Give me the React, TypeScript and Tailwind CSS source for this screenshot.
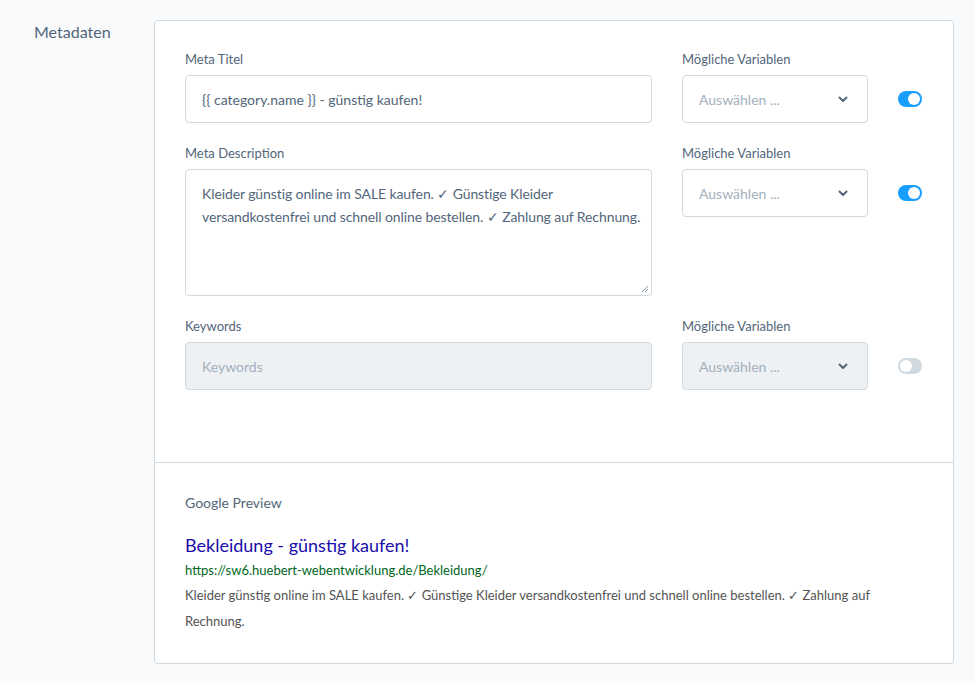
import React from "react";

const font = { fontFamily: "Lato, 'Noto Sans', sans-serif" };

function Chevron() {
  return (
    <svg width="10" height="7" viewBox="0 0 10 7" className="shrink-0">
      <path d="M1.5 1.5 L5 5 L8.5 1.5" fill="none" stroke="#52667a" strokeWidth="2" strokeLinecap="round" strokeLinejoin="round" />
    </svg>
  );
}

function Toggle({ on }: { on: boolean }) {
  return (
    <div className="flex h-[48px] items-center justify-end">
      <div
        className={
          on
            ? "flex h-[16px] w-[24px] items-center justify-end rounded-full bg-[#189eff] px-[2px]"
            : "flex h-[16px] w-[24px] items-center justify-start rounded-full bg-[#d1d9e0] px-[2px]"
        }
      >
        <div className="h-[12px] w-[12px] rounded-full bg-white" />
      </div>
    </div>
  );
}

function Select({ disabled }: { disabled?: boolean }) {
  return (
    <div
      className={
        "flex h-[48px] items-center justify-between rounded-[4px] border border-[#d1d9e0] pl-[16px] pr-[19px] " +
        (disabled ? "bg-[#eef1f4]" : "bg-white")
      }
    >
      <span className="text-[14px] text-[#a3b0bd]">Auswählen ...</span>
      <Chevron />
    </div>
  );
}

function Label({ children }: { children: React.ReactNode }) {
  return <div className="mb-[8px] h-[16px] text-[13px] leading-[16px] text-[#52667a]">{children}</div>;
}

export default function App() {
  return (
    <div className="min-h-[683px] w-[975px] bg-[#f9fafb]" style={font}>
      <div className="flex pt-[20px]">
        <div className="w-[154px] shrink-0 pl-[34px] pt-[1px] text-[16px] leading-[22px] text-[#52667a]">Metadaten</div>
        <div className="w-[800px] rounded-[4px] border border-[#d1d9e0] bg-white">
          <div className="grid grid-cols-[467px_186px_1fr] gap-x-[30px] gap-y-[22px] pb-[72px] pl-[30px] pr-[31px] pt-[30px]">
            <div>
              <Label>Meta Titel</Label>
              <div className="flex h-[48px] items-center rounded-[4px] border border-[#d1d9e0] px-[16px] text-[14px] text-[#52667a]">
                {"{{ category.name }} - günstig kaufen!"}
              </div>
            </div>
            <div>
              <Label>Mögliche Variablen</Label>
              <Select />
            </div>
            <div className="pt-[24px]">
              <Toggle on />
            </div>

            <div>
              <Label>Meta Description</Label>
              <div className="relative h-[127px] whitespace-nowrap rounded-[4px] border border-[#d1d9e0] px-[16px] pt-[12px] text-[14px] leading-[23px] tracking-[-0.1px] text-[#52667a]">
                Kleider günstig online im SALE kaufen. ✓ Günstige Kleider
                <br />
                versandkostenfrei und schnell online bestellen. ✓ Zahlung auf Rechnung.
                <svg width="8" height="8" viewBox="0 0 8 8" className="absolute bottom-[2px] right-[2px]">
                  <path d="M7 1 L1 7 M7 4 L4 7" stroke="#8a99a8" strokeWidth="1" />
                </svg>
              </div>
            </div>
            <div>
              <Label>Mögliche Variablen</Label>
              <Select />
            </div>
            <div className="pt-[24px]">
              <Toggle on />
            </div>

            <div>
              <Label>Keywords</Label>
              <div className="flex h-[48px] items-center rounded-[4px] border border-[#d1d9e0] bg-[#eef1f4] px-[16px] text-[14px] text-[#a3b0bd]">
                Keywords
              </div>
            </div>
            <div>
              <Label>Mögliche Variablen</Label>
              <Select disabled />
            </div>
            <div className="pt-[24px]">
              <Toggle on={false} />
            </div>
          </div>
          <div className="border-t border-[#d1d9e0] px-[30px] pb-[29px] pt-[30px]">
            <div className="text-[14px] leading-[20px] text-[#52667a]">Google Preview</div>
            <div className="mt-[20px] text-[18px] leading-[24px] text-[#1a0dab]">Bekleidung - günstig kaufen!</div>
            <div className="mt-[4px] text-[13px] leading-[18px] text-[#006621]">https://sw6.huebert-webentwicklung.de/Bekleidung/</div>
            <div className="mt-[3px] text-[13px] leading-[26px] text-[#545454]">
              Kleider günstig online im SALE kaufen. ✓ Günstige Kleider versandkostenfrei und schnell online bestellen. ✓ Zahlung auf
              <br />
              Rechnung.
            </div>
          </div>
        </div>
      </div>
    </div>
  );
}
